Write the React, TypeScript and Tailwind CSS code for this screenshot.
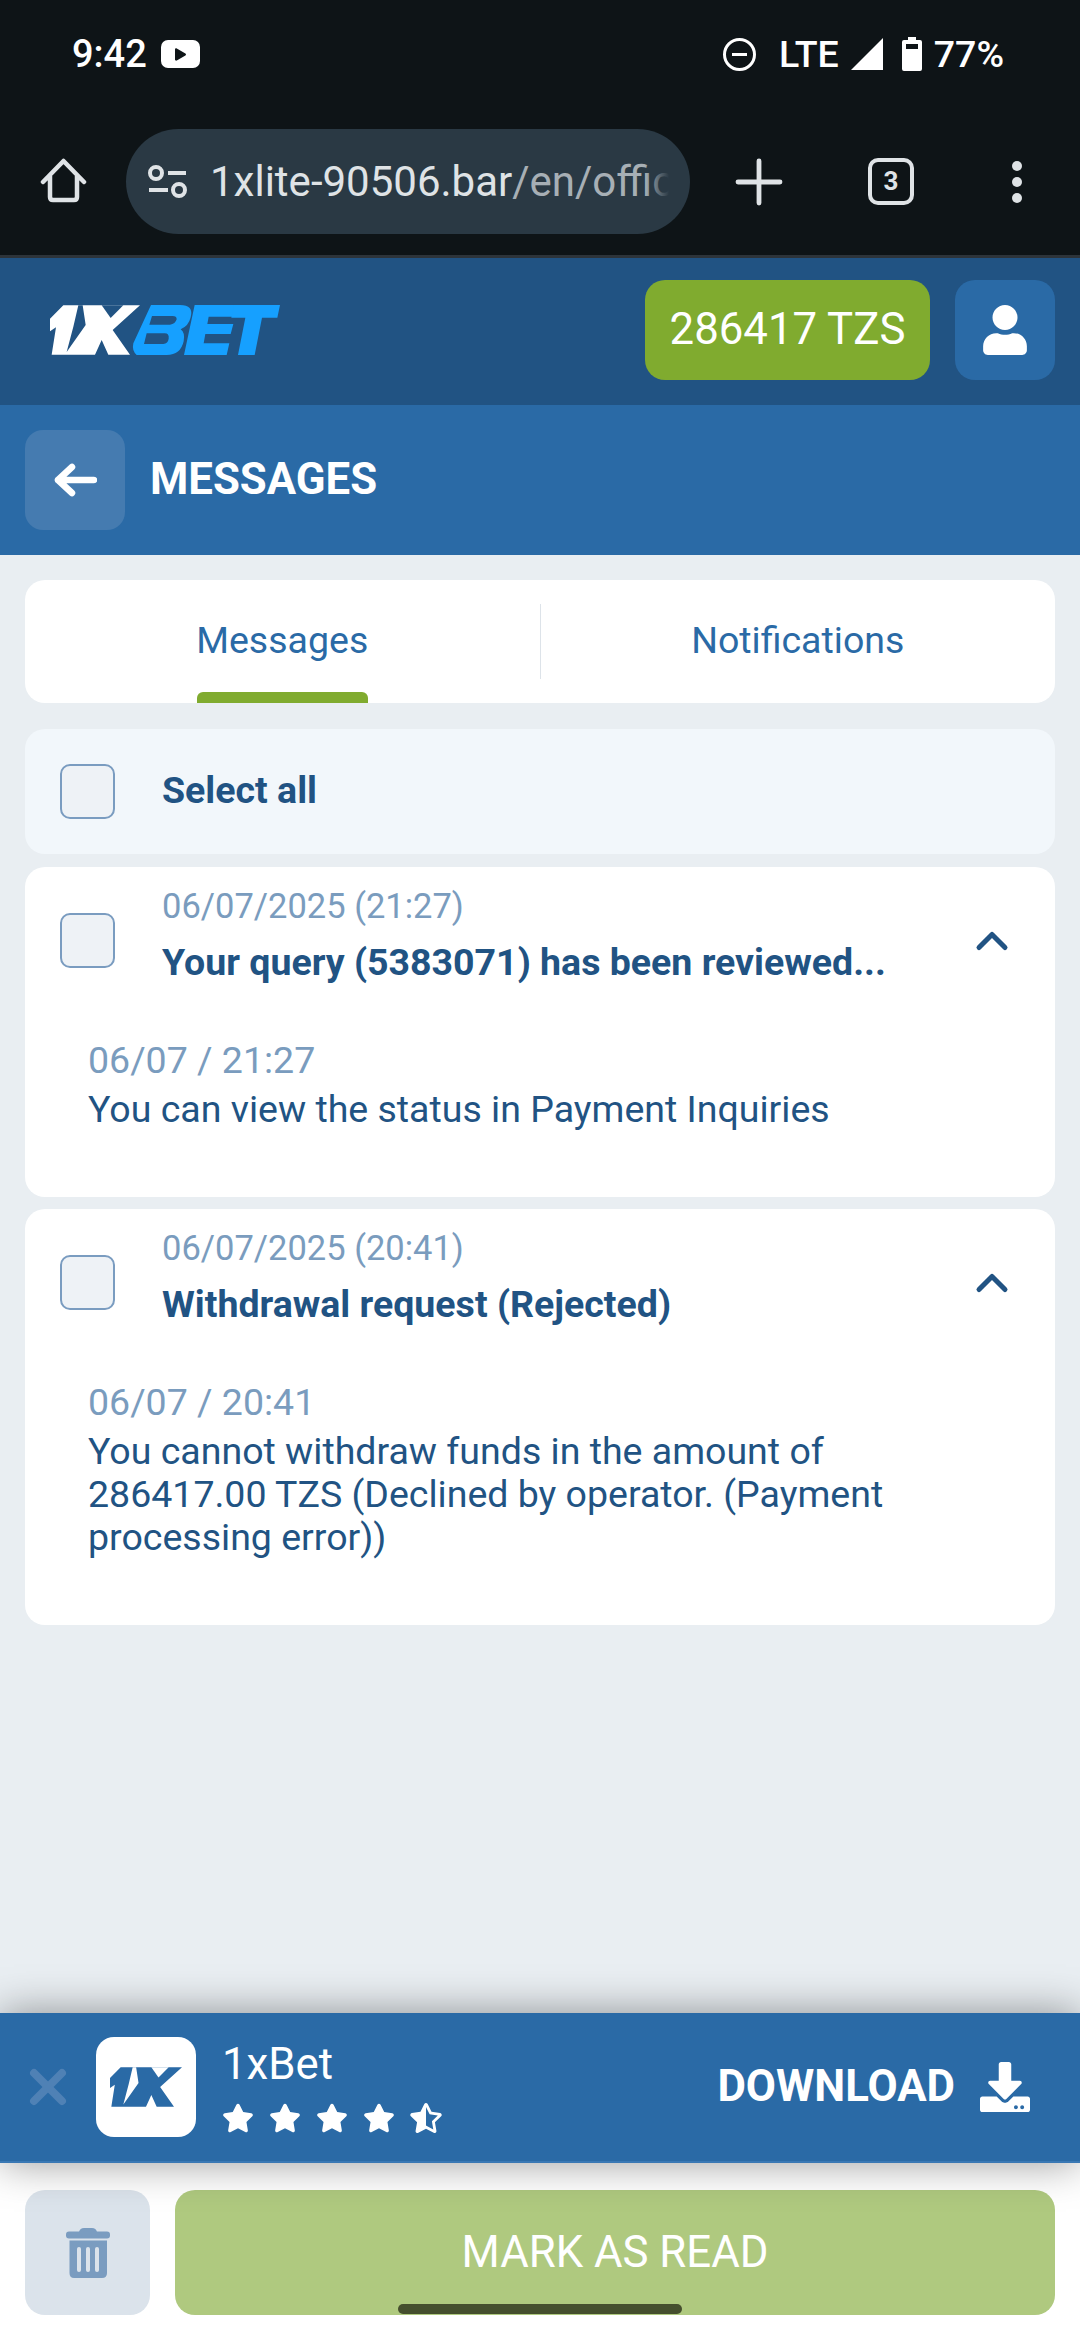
import React from "react";
import { FaUser, FaDownload, FaStar, FaStarHalfAlt, FaPlay } from "react-icons/fa";
import { Plus, ChevronUp, X } from "lucide-react";

const Checkbox = ({ className = "" }: { className?: string }) => (
  <div className={`w-[55px] h-[55px] shrink-0 rounded-[10px] border-2 border-[#7a9cc0] bg-[#eef2f6] ${className}`} />
);

// the "1X" mark, shared by the header logo and the banner icon
const Mark = ({ fill, dark }: { fill: string; dark: string }) => (
  <>
    <path d="M90 116 L130 76 H360 L278 150 L330 224 H265 L245 180 L225 224 H95 L108 142 L90 154 Z" fill={fill} />
    <path d="M245 76 H310 L272 114 Z" fill={dark} />
    <path d="M175 76 H188 L197 135 L140 216 L160 140 Z" fill={dark} />
  </>
);

const Message = ({
  date,
  title,
  shortDate,
  body,
}: {
  date: string;
  title: string;
  shortDate: string;
  body: string;
}) => (
  <div className="bg-white rounded-[20px] pt-[18px] pb-[66px]">
    <div className="flex">
      <Checkbox className="ml-[35px] mt-[28px]" />
      <div className="ml-[47px] flex-1 min-w-0">
        <p className="text-[34.5px] leading-[43px] text-[#7a9cbe]">{date}</p>
        <p className="mt-[13px] text-[37.5px] leading-[43px] font-bold text-[#215383] whitespace-nowrap">{title}</p>
      </div>
      <ChevronUp className="mt-[30px] mr-[37px] w-[52px] h-[52px] text-[#215383]" strokeWidth={2.3} />
    </div>
    <div className="mt-[55px] pl-[63px] pr-[100px]">
      <p className="text-[37.5px] leading-[43px] text-[#7a9cbe]">{shortDate}</p>
      <p className="mt-[6px] text-[37.5px] leading-[43px] text-[#215383]">{body}</p>
    </div>
  </div>
);

export default function App() {
  return (
    <div className="w-[1080px] h-[2340px] flex flex-col overflow-hidden bg-[#e9eef2] font-['Roboto',sans-serif]">
      {/* Status bar and browser bar */}
      <div className="bg-[#0e1417] h-[255px] shrink-0 text-white">
        <div className="flex items-center justify-between h-[108px] pl-[72px] pr-[76px]">
          <div className="flex items-center gap-[14px]">
            <span className="text-[38px] font-medium">9:42</span>
            <div className="w-[39px] h-[28px] bg-white rounded-[7px] flex items-center justify-center">
              <FaPlay className="w-[11px] h-[13px] text-[#0e1417]" />
            </div>
          </div>
          <div className="flex items-center">
            <div className="w-[33px] h-[33px] rounded-full border-[3px] border-white flex items-center justify-center">
              <div className="w-[15px] h-[3px] bg-white" />
            </div>
            <span className="ml-[23px] text-[37.5px] font-medium">LTE</span>
            <svg viewBox="0 0 32 32" className="ml-[12px] w-[32px] h-[32px]">
              <path d="M32 0 V32 H0 Z" fill="#fff" />
            </svg>
            <svg viewBox="0 0 20 34" className="ml-[19px] w-[20px] h-[34px]">
              <path d="M6 0 H14 V3 H18 Q20 3 20 5 V32 Q20 34 18 34 H2 Q0 34 0 32 V5 Q0 3 2 3 H6 Z" fill="#fff" />
              <rect x="4" y="7" width="12" height="5" fill="#0e1417" />
            </svg>
            <span className="ml-[12px] text-[37.5px] font-medium">77%</span>
          </div>
        </div>
        <div className="flex items-center h-[105px] mt-[21px]">
          <svg viewBox="0 0 47 47" className="ml-[40px] w-[47px] h-[47px]" fill="none" stroke="#dfe3e6" strokeWidth="4.5" strokeLinejoin="round" strokeLinecap="round">
            <path d="M3 24 L23.5 3 L44 24 M10 18 V39 Q10 42 13 42 H34 Q37 42 37 39 V18" />
          </svg>
          <div className="ml-[39px] w-[564px] h-[105px] rounded-full bg-[#2a3944] flex items-center overflow-hidden">
            <svg viewBox="0 0 40 34" className="ml-[22px] w-[40px] h-[34px] shrink-0" fill="none" stroke="#dfe3e6" strokeWidth="4">
              <circle cx="8" cy="8" r="6" />
              <path d="M20 8 H38 M1 25 H20" />
              <circle cx="31" cy="25" r="6" />
            </svg>
            <div className="relative ml-[22px] w-[459px] overflow-hidden whitespace-nowrap text-[42px] text-[#dfe3e6]">
              1xlite-90506.bar<span className="text-[#a7afb5]">/en/offic</span>
              <div className="absolute right-0 top-0 bottom-0 w-[24px] bg-gradient-to-r from-transparent to-[#2a3944]" />
            </div>
          </div>
          <Plus className="ml-[33px] w-[72px] h-[72px] text-[#dfe3e6]" strokeWidth={1.6} />
          <div className="ml-[73px] w-[46px] h-[47px] rounded-[10px] border-[4px] border-[#dfe3e6] flex items-center justify-center text-[26px] font-bold text-[#dfe3e6]">3</div>
          <div className="ml-[98px] flex flex-col gap-[6px]">
            <div className="w-[10px] h-[10px] rounded-full bg-[#dfe3e6]" />
            <div className="w-[10px] h-[10px] rounded-full bg-[#dfe3e6]" />
            <div className="w-[10px] h-[10px] rounded-full bg-[#dfe3e6]" />
          </div>
        </div>
      </div>

      {/* Site header */}
      <div className="h-[3px] shrink-0 bg-[#2d343a]" />
      <div className="h-[147px] shrink-0 bg-[#215383] flex items-center pl-[50px] pr-[25px] pb-[3px]">
        <svg viewBox="90 75 690 150" className="w-[230px] h-[50px]">
          <Mark fill="#fff" dark="#215383" />
          <path
            fillRule="evenodd"
            d="M393 75 H480 Q522 75 512 112 Q506 138 482 148 Q496 158 491 184 Q482 225 440 225 H350 Q335 212 340 190 Z M396 108 L388 134 H450 Q466 132 470 118 Q470 108 458 108 Z M380 160 L372 192 H430 Q444 190 446 176 Q448 160 434 160 Z"
            fill="#16a0ff"
          />
          <path d="M524 75 H658 L650 110 H566 L562 132 H640 L632 162 H556 L551 190 H628 L620 225 H492 Z" fill="#16a0ff" />
          <path d="M642 75 H780 L772 113 H726 L704 225 H654 L676 113 H634 Z" fill="#16a0ff" />
        </svg>
        <div className="ml-auto w-[285px] h-[100px] rounded-[20px] bg-[#80ab2f] flex items-center justify-center text-white text-[43.75px]">286417 TZS</div>
        <div className="ml-[25px] w-[100px] h-[100px] rounded-[20px] bg-[#2a6aa6] flex items-center justify-center">
          <FaUser className="w-[44px] h-[50px] text-white" />
        </div>
      </div>

      {/* Page title */}
      <div className="h-[150px] shrink-0 bg-[#2a6aa6] flex items-center pl-[25px]">
        <div className="w-[100px] h-[100px] rounded-[18px] bg-[#457bb0] flex items-center justify-center">
          <svg viewBox="0 0 44 34" className="w-[44px] h-[34px]" fill="none" stroke="#fff" strokeWidth="6.5" strokeLinecap="round" strokeLinejoin="round">
            <path d="M19 4 L5 17 L19 30 M5 17 H41" />
          </svg>
        </div>
        <h1 className="ml-[25px] text-[43.75px] font-bold text-white">MESSAGES</h1>
      </div>

      {/* Content */}
      <div className="flex-1 min-h-0 px-[25px] pt-[25px]">
        <div className="h-[123px] rounded-[20px] bg-white flex items-center text-[37.5px] text-[#2a6aa6] relative">
          <div className="flex-1 text-center mb-[3px]">Messages</div>
          <div className="w-px h-[75px] bg-[#dde3e9]" />
          <div className="flex-1 text-center mb-[3px]">Notifications</div>
          <div className="absolute left-[172px] bottom-0 w-[171px] h-[11px] rounded-t-[6px] bg-[#80ab2f]" />
        </div>

        <div className="mt-[26px] h-[125px] rounded-[20px] bg-[#f2f7fb] flex items-center pl-[35px]">
          <Checkbox className="bg-[#e7edf4]" />
          <span className="ml-[47px] mb-[2px] text-[37.5px] font-bold text-[#215383]">Select all</span>
        </div>

        <div className="mt-[13px] flex flex-col gap-[12px]">
          <Message
            date="06/07/2025 (21:27)"
            title="Your query (5383071) has been reviewed..."
            shortDate="06/07 / 21:27"
            body="You can view the status in Payment Inquiries"
          />
          <Message
            date="06/07/2025 (20:41)"
            title="Withdrawal request (Rejected)"
            shortDate="06/07 / 20:41"
            body="You cannot withdraw funds in the amount of 286417.00 TZS (Declined by operator. (Payment processing error))"
          />
        </div>
      </div>

      {/* App banner */}
      <div className="relative z-10 h-[150px] shrink-0 bg-[#2a6aa6] border-b-2 border-[#3a78b4] shadow-[0_0_40px_rgba(0,0,0,0.4)] flex items-center pl-[20px] pr-[50px]">
        <X className="w-[56px] h-[56px] text-[#4f81b5]" strokeWidth={3.4} />
        <div className="ml-[20px] w-[100px] h-[100px] rounded-[18px] bg-white flex items-center justify-center">
          <svg viewBox="90 76 270 148" className="w-[72px] h-[40px]">
            <Mark fill="#2a6aa6" dark="#fff" />
          </svg>
        </div>
        <div className="ml-[26px]">
          <div className="text-[43.75px] leading-[46px] text-white">1xBet</div>
          <div className="mt-[16px] flex gap-[15px] text-white">
            <FaStar className="w-[32px] h-[30px]" />
            <FaStar className="w-[32px] h-[30px]" />
            <FaStar className="w-[32px] h-[30px]" />
            <FaStar className="w-[32px] h-[30px]" />
            <FaStarHalfAlt className="w-[32px] h-[30px]" />
          </div>
        </div>
        <span className="ml-auto text-[43.75px] font-bold text-white">DOWNLOAD</span>
        <FaDownload className="ml-[25px] w-[50px] h-[50px] text-white" />
      </div>

      {/* Bottom actions */}
      <div className="relative h-[177px] shrink-0 bg-white flex px-[25px] pt-[27px] gap-[25px]">
        <div className="w-[125px] h-[125px] rounded-[20px] bg-[#dbe3eb] flex items-center justify-center">
          <svg viewBox="0 0 44 50" className="w-[44px] h-[50px]">
            <path d="M13 4 Q14 0 18 0 H26 Q30 0 31 4 Z" fill="#7a9cc0" />
            <rect x="0" y="3.5" width="44" height="7" rx="3" fill="#7a9cc0" />
            <path d="M3.5 12.5 H41 V45 Q41 50 36 50 H8 Q3.5 50 3.5 45 Z" fill="#7a9cc0" />
            <rect x="11" y="19" width="4" height="25" rx="2" fill="#dbe3eb" />
            <rect x="20" y="19" width="4" height="25" rx="2" fill="#dbe3eb" />
            <rect x="29" y="19" width="4" height="25" rx="2" fill="#dbe3eb" />
          </svg>
        </div>
        <div className="flex-1 h-[125px] rounded-[20px] bg-[#afc97f] flex items-center justify-center text-[43.75px] text-white">MARK AS READ</div>
        <div className="absolute left-[398px] top-[141px] w-[284px] h-[10px] rounded-full bg-[#454f2e]" />
      </div>
    </div>
  );
}
